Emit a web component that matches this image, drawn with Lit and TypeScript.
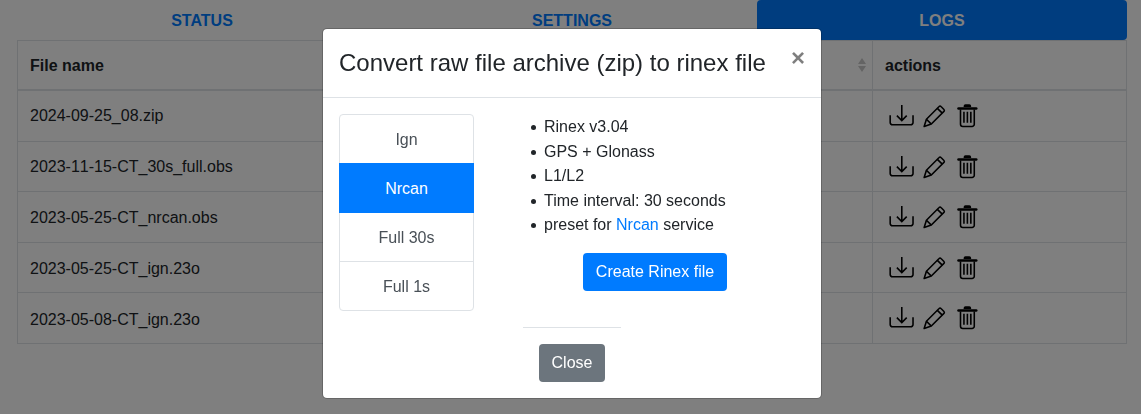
import { LitElement, html, css } from 'lit';
import { customElement, state } from 'lit/decorators.js';

const downloadIcon = html`<svg viewBox="0 0 26 26" fill="none" stroke="currentColor" stroke-width="1.6">
  <path d="M1.2 12.5v7.3a2.3 2.3 0 0 0 2.3 2.3h18.600a2.3 2.3 0 0 0 2.3-2.3v-7.3" />
  <path d="M13 2v16M8 12.8 13 17.8l5-5" />
</svg>`;

const pencilIcon = html`<svg viewBox="0 0 26 26" fill="none" stroke="currentColor" stroke-width="1.6" stroke-linejoin="round">
  <path d="M3.2 23.8l2.3-7.3L18.4 3.6a1.3 1.3 0 0 1 1.9 0l3 3a1.3 1.3 0 0 1 0 1.9L10.500 21.4z" />
  <path d="M5.5 16.5l5 4.9M16.6 5.400l5 4.9" />
</svg>`;

const trashIcon = html`<svg viewBox="0 0 26 26" fill="none" stroke="currentColor" stroke-width="1.6" stroke-linejoin="round">
  <g transform="translate(0.8 0)">
    <path d="M3.8 5.6h18" stroke-width="2.6" stroke-linecap="round" />
    <path d="M9 4V3a1.800 1.800 0 0 1 1.800-1.800h4a1.800 1.800 0 0 1 1.800 1.800v1z" fill="currentColor" stroke="none" />
    <path d="M5.8 6.5v15a2.3 2.3 0 0 0 2.3 2.3h9.400a2.3 2.3 0 0 0 2.3-2.3v-15" />
    <path d="M9.3 9v11M12.800 9v11M16.3 9v11" />
  </g>
</svg>`;

@customElement('app-root')
export class AppRoot extends LitElement {
  static styles = css`
    :host {
      display: block;
      height: 414px;
      overflow: hidden;
      font-family: 'Liberation Sans', Arial, sans-serif;
      font-size: 16px;
      line-height: 24px;
      color: #212529;
      background: #fff;
    }

    .page {
      padding: 0 14px 0 17px;
    }

    .tabs {
      display: grid;
      grid-template-columns: repeat(3, 1fr);
    }

    .tab {
      padding: 9px 16px 7px;
      text-align: center;
      font-weight: 700;
      color: #007bff;
      border-radius: 4px;
    }

    .tab.active {
      background: #007bff;
      color: #fff;
    }

    table {
      width: 100%;
      table-layout: fixed;
      border-collapse: collapse;
    }

    th,
    td {
      padding: 13px 12px 11px;
      border: 1px solid #dee2e6;
      text-align: left;
      vertical-align: top;
    }

    td {
      font-kerning: none;
    }

    /* rows are 50.6px tall, the file names sit on whole pixels further down */
    tr:nth-child(n + 3) td.name {
      padding-top: 14px;
      padding-bottom: 10px;
    }

    tr:nth-child(5) td.name {
      padding-top: 15px;
      padding-bottom: 9px;
    }

    th {
      border-bottom-width: 2px;
      position: relative;
    }

    td.icons {
      padding: 12px;
    }

    .first {
      width: 830px;
    }

    .sort {
      position: absolute;
      right: 6px;
      top: 17px;
      display: flex;
      flex-direction: column;
      gap: 2px;
    }

    .sort i {
      display: block;
      width: 0;
      height: 0;
      border-left: 4px solid transparent;
      border-right: 4px solid transparent;
    }

    .sort .up {
      border-bottom: 6px solid #c8c8c8;
    }

    .sort .down {
      border-top: 6px solid #c8c8c8;
    }

    .actions {
      display: flex;
      gap: 7.4px;
      padding-left: 3.5px;
      color: #000;
    }

    .actions svg {
      display: block;
      width: 25.6px;
      height: 25.6px;
    }

    .backdrop {
      position: fixed;
      inset: 0;
      background: rgba(0, 0, 0, 0.5);
      display: flex;
      justify-content: center;
      align-items: flex-start;
      padding: 28px 0 0 3px;
    }

    .modal {
      width: 500px;
      box-sizing: border-box;
      background: #fff;
      border: 1px solid rgba(0, 0, 0, 0.2);
      border-radius: 5px;
      background-clip: padding-box;
    }

    .modal-header {
      display: flex;
      justify-content: space-between;
      padding: 16px;
      border-bottom: 1px solid #dee2e6;
    }

    .modal-title {
      margin: 0;
      font-size: 24px;
      font-weight: 400;
      line-height: 36px;
    }

    .close {
      font-size: 24px;
      font-weight: 700;
      line-height: 24px;
      color: #000;
      opacity: 0.5;
      margin: -10px 0 0;
      padding: 0;
      font-family: inherit;
      border: 0;
      background: none;
    }

    .modal-body {
      padding: 16px 16px 0;
      display: grid;
      grid-template-columns: 135px 1fr;
    }

    .list {
      display: flex;
      flex-direction: column;
      padding-bottom: 1px;
    }

    .item {
      position: relative;
      padding: 13px 20px 11px;
      margin-bottom: -1px;
      text-align: center;
      color: #495057;
      border: 1px solid #dee2e6;
    }

    .item:first-child {
      border-radius: 4px 4px 0 0;
    }

    .item:last-child {
      border-radius: 0 0 4px 4px;
    }

    .item.active {
      z-index: 1;
      background: #007bff;
      border-color: #007bff;
      color: #fff;
    }

    .info {
      display: flex;
      flex-direction: column;
      align-items: center;
      padding-left: 32px;
    }

    .info ul {
      margin: 1px 0 0 -2px;
      padding: 0 0 0 40px;
      align-self: stretch;
      line-height: 24.5px;
      list-style: none;
    }

    .info li {
      position: relative;
    }

    .info li::before {
      content: '';
      position: absolute;
      left: -13.5px;
      top: 10px;
      width: 5px;
      height: 5px;
      border-radius: 50%;
      background: #212529;
    }

    .info a {
      color: #007bff;
      text-decoration: none;
    }

    .btn {
      display: inline-block;
      padding: 6px 12px;
      font: inherit;
      line-height: 24px;
      color: #fff;
      border: 1px solid transparent;
      border-radius: 4px;
      background: #007bff;
    }

    .btn.create {
      margin: 15px 0 0 -1px;
    }

    .btn.secondary {
      background: #6c757d;
    }

    .footer {
      display: flex;
      flex-direction: column;
      align-items: center;
      padding-bottom: 16px;
    }

    hr {
      width: 98px;
      height: 1px;
      border: 0;
      background: #dee2e6;
      margin: 16px 0;
    }
  `;

  @state() files = [
    '2024-09-25_08.zip',
    '2023-11-15-CT_30s_full.obs',
    '2023-05-25-CT_nrcan.obs',
    '2023-05-25-CT_ign.23o',
    '2023-05-08-CT_ign.23o',
  ];

  @state() presets = ['Ign', 'Nrcan', 'Full 30s', 'Full 1s'];

  render() {
    return html`
      <div class="page">
        <div class="tabs">
          <div class="tab">STATUS</div>
          <div class="tab">SETTINGS</div>
          <div class="tab active">LOGS</div>
        </div>
        <table>
          <thead>
            <tr>
              <th class="first">
                File name
                <span class="sort"><i class="up"></i><i class="down"></i></span>
              </th>
              <th>actions</th>
            </tr>
          </thead>
          <tbody>
            ${this.files.map(
              (name) => html`
                <tr>
                  <td class="name">${name}</td>
                  <td class="icons">
                    <div class="actions">${downloadIcon}${pencilIcon}${trashIcon}</div>
                  </td>
                </tr>
              `
            )}
          </tbody>
        </table>
      </div>
      <div class="backdrop">
        <div class="modal">
          <div class="modal-header">
            <h5 class="modal-title">Convert raw file archive (zip) to rinex file</h5>
            <button class="close">×</button>
          </div>
          <div class="modal-body">
            <div class="list">
              ${this.presets.map(
                (p) => html`<div class="item ${p === 'Nrcan' ? 'active' : ''}">${p}</div>`
              )}
            </div>
            <div class="info">
              <ul>
                <li>Rinex v3.04</li>
                <li>GPS + Glonass</li>
                <li>L1/L2</li>
                <li>Time interval: 30 seconds</li>
                <li>preset for <a href="#">Nrcan</a> service</li>
              </ul>
              <button class="btn create">Create Rinex file</button>
            </div>
          </div>
          <div class="footer">
            <hr />
            <button class="btn secondary">Close</button>
          </div>
        </div>
      </div>
    `;
  }
}
